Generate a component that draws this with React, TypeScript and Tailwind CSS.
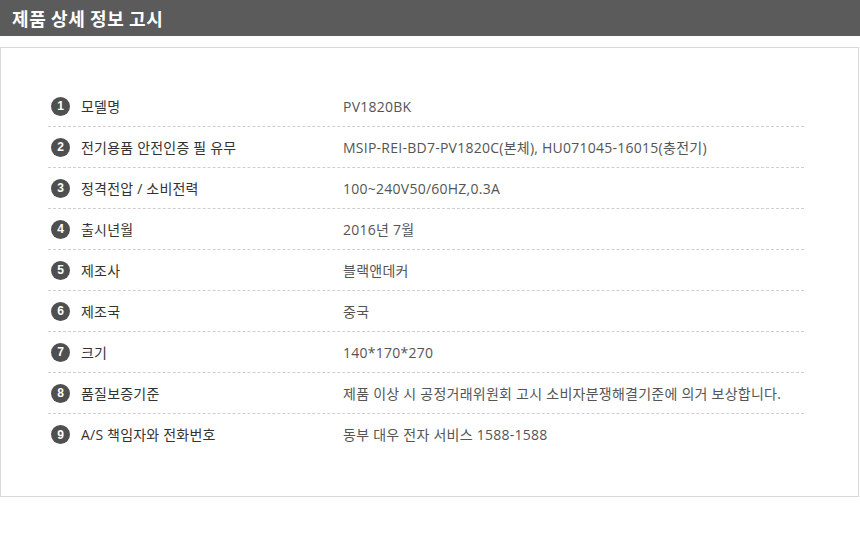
import React from "react";

const rows: [string, string][] = [
  ["모델명", "PV1820BK"],
  ["전기용품 안전인증 필 유무", "MSIP-REI-BD7-PV1820C(본체), HU071045-16015(충전기)"],
  ["정격전압 / 소비전력", "100~240V50/60HZ,0.3A"],
  ["출시년월", "2016년 7월"],
  ["제조사", "블랙앤데커"],
  ["제조국", "중국"],
  ["크기", "140*170*270"],
  ["품질보증기준", "제품 이상 시 공정거래위원회 고시 소비자분쟁해결기준에 의거 보상합니다."],
  ["A/S 책임자와 전화번호", "동부 대우 전자 서비스 1588-1588"],
];

export default function App() {
  return (
    <div
      className="w-[860px] h-[557px] bg-white"
      style={{ fontFamily: '"Open Sans", "Noto Sans CJK KR", sans-serif' }}
    >
      <div className="h-[36px] bg-[#5b5b5b] flex items-center pl-[12px]">
        <span className="text-white text-[18px] font-semibold tracking-[0.6px]" style={{ fontFamily: '"Noto Sans CJK KR", sans-serif' }}>
          제품 상세 정보 고시
        </span>
      </div>
      <div className="mt-[11px] w-[859px] h-[450px] border border-[#d9d9d9] pt-[38px] pl-[47px] pr-[54px]">
        {rows.map(([label, value], i) => (
          <div
            key={i}
            className={`h-[41px] flex items-center ${i < rows.length - 1 ? "border-b border-dashed border-[#cfcfcf]" : ""}`}
          >
            <div className="w-[295px] flex items-center">
              <span className="ml-[3px] w-[19px] h-[19px] rounded-full bg-[#4f4f4f] text-white text-[12px] font-bold flex items-center justify-center leading-none" style={{ fontFamily: '"Liberation Sans", sans-serif' }}>
                {i + 1}
              </span>
              <span className="ml-[11px] text-[14px] text-[#333] tracking-[0.2px]">{label}</span>
            </div>
            <span className="text-[14px] text-[#555] tracking-[0.25px]">{value}</span>
          </div>
        ))}
      </div>
    </div>
  );
}
